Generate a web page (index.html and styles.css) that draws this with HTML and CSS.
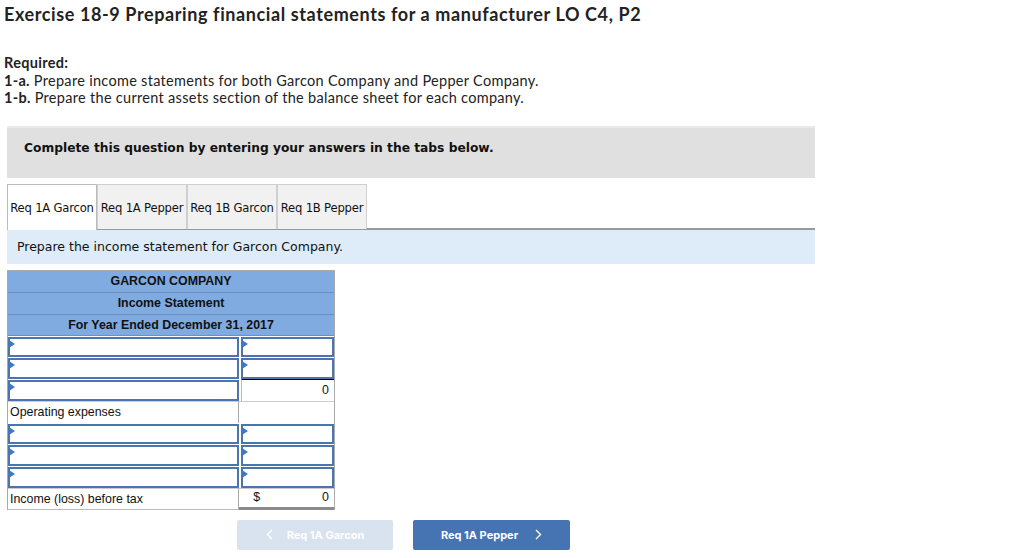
FILE: index.html
```html
<!DOCTYPE html>
<html>
<head>
<meta charset="utf-8">
<link rel="stylesheet" href="styles.css">
</head>
<body>
<div class="page">
  <h1 class="title">Exercise 18-9 Preparing financial statements for a manufacturer LO C4, P2</h1>
  <div class="required">
    <div class="req-label">Required:</div>
    <div class="req-line"><b>1-a.</b> Prepare income statements for both Garcon Company and Pepper Company.</div>
    <div class="req-line"><b>1-b.</b> Prepare the current assets section of the balance sheet for each company.</div>
  </div>
  <div class="instructions">Complete this question by entering your answers in the tabs below.</div>
  <div class="tabs">
    <div class="tab active">Req 1A Garcon</div>
    <div class="tab">Req 1A Pepper</div>
    <div class="tab">Req 1B Garcon</div>
    <div class="tab">Req 1B Pepper</div>
  </div>
  <div class="prompt">Prepare the income statement for Garcon Company.</div>
  <div class="sheet">
    <div class="hdr">GARCON COMPANY</div>
    <div class="hdr">Income Statement</div>
    <div class="hdr">For Year Ended December 31, 2017</div>
    <div class="row">
      <div class="cell left input"></div>
      <div class="cell right input"></div>
    </div>
    <div class="row">
      <div class="cell left input"></div>
      <div class="cell right input"></div>
    </div>
    <div class="row">
      <div class="cell left input"></div>
      <div class="cell right total">0</div>
    </div>
    <div class="row">
      <div class="cell left label">Operating expenses</div>
      <div class="cell right plain"></div>
    </div>
    <div class="row">
      <div class="cell left input"></div>
      <div class="cell right input"></div>
    </div>
    <div class="row">
      <div class="cell left input"></div>
      <div class="cell right input"></div>
    </div>
    <div class="row">
      <div class="cell left input"></div>
      <div class="cell right input"></div>
    </div>
    <div class="row">
      <div class="cell left label">Income (loss) before tax</div>
      <div class="cell right final"><span>$</span><span>0</span></div>
    </div>
  </div>
  <div class="nav">
    <div class="btn disabled">
      <svg class="chev" width="7" height="11" viewBox="0 0 7 11"><polyline points="6,1 1.5,5.5 6,10" fill="none" stroke="#fff" stroke-width="1.4"/></svg>
      <span class="btn-text">Req 1A Garcon</span>
    </div>
    <div class="btn primary">
      <span class="btn-text">Req 1A Pepper</span>
      <svg class="chev" width="7" height="11" viewBox="0 0 7 11"><polyline points="1,1 5.5,5.5 1,10" fill="none" stroke="#fff" stroke-width="1.4"/></svg>
    </div>
  </div>
</div>
</body>
</html>
```
FILE: styles.css
```css
* { box-sizing: border-box; }
html, body { margin: 0; padding: 0; background: #fff; }
.page { width: 1024px; height: 558px; overflow: hidden; position: relative; }
.title {
  margin: 0;
  padding: 4px 0 0 4px;
  font-family: Lato, "Liberation Sans", sans-serif;
  font-weight: 700;
  font-size: 18px;
  line-height: 20px;
  color: #222;
  letter-spacing: 0.6px;
  white-space: nowrap;
}
.required {
  margin-top: 30px;
  padding-left: 4px;
  font-family: Lato, "Liberation Sans", sans-serif;
  font-size: 14.5px;
  line-height: 17.5px;
  letter-spacing: 0.3px;
  color: #222;
  white-space: nowrap;
}
.req-label { font-weight: 700; }
.req-line b { font-weight: 700; }
.instructions {
  margin: 19px 0 0 7px;
  width: 808px;
  height: 52px;
  background: #e0e0e0;
  border-top: 2px solid #e9e9e9;
  padding: 12px 0 0 17px;
  font-family: "DejaVu Sans", Verdana, sans-serif;
  font-weight: 700;
  font-size: 12.25px;
  line-height: 16px;
  color: #111;
}
.tabs {
  margin: 6px 0 0 7px;
  width: 808px;
  height: 46px;
  display: flex;
  align-items: flex-end;
  border-bottom: 2px solid #999;
}
.tab {
  width: 90px;
  height: 45px;
  margin-bottom: -1px;
  background: #f1f1f1;
  border: 1px solid #cfcfcf;
  border-bottom: none;
  display: flex;
  align-items: center;
  justify-content: center;
  padding-top: 2px;
  font-family: "DejaVu Sans", Verdana, sans-serif;
  font-size: 11.6px;
  color: #111;
  white-space: nowrap;
  letter-spacing: -0.2px;
}
.tab.active {
  background: #fff;
  border-color: #bbb;
  height: 46px;
  margin-bottom: -2px;
}
.prompt {
  margin-left: 7px;
  width: 808px;
  height: 34px;
  background: #deecf9;
  padding: 9px 0 0 10px;
  font-family: "DejaVu Sans", Verdana, sans-serif;
  font-size: 12.5px;
  line-height: 16px;
  color: #111;
}
.sheet {
  margin: 6px 0 0 7px;
  width: 328px;
  border: 1px solid #aaa;
  border-bottom: none;
  font-family: "Liberation Sans", Arial, sans-serif;
  font-size: 12.4px;
  color: #111;
}
.hdr {
  height: 22px;
  background: #80abe0;
  border-bottom: 1px solid #6b8fbf;
  text-align: center;
  font-weight: 700;
  font-size: 12.4px;
  line-height: 21px;
}
.hdr:nth-child(3) { height: 21px; }
.row {
  display: flex;
  height: 21.75px;
}
.cell { height: 21.75px; position: relative; }
.left { width: 232px; }
.right { width: 94px; }
.input {
  border: 2px solid #4c74b0;
  margin: 1px 1px 0 1px;
  height: 20.75px;
  background: #fff;
}
.input::before {
  content: "";
  position: absolute;
  left: -1px;
  top: 1px;
  border-left: 6px solid #3f78c8;
  border-top: 4px solid transparent;
  border-bottom: 4px solid transparent;
}
.left.input { margin-left: 0; width: 232px; }
.right.input { width: 94px; margin-right: 0; }
.label {
  border-top: 1px solid #ccc;
  border-right: 1px solid #aaa;
  padding: 2px 0 0 2px;
  line-height: 16px;
  white-space: nowrap;
}
.plain {
  border-top: 1px solid #ccc;
  width: 95px;
}
.total {
  border-top: 1px solid #000;
  border-left: 1px solid #bbb;
  margin-left: 1px;
  width: 94px;
  text-align: right;
  padding: 2px 5px 0 0;
  line-height: 16px;
}
.final {
  border-top: 1px solid #ccc;
  border-bottom: 3px solid #8a8a8a;
  width: 95px;
  display: flex;
  justify-content: space-between;
  padding: 1px 5px 0 14px;
  line-height: 14px;
}
.row:last-child .label { border-bottom: 1px solid #bbb; }
.nav {
  display: flex;
  margin: 10px 0 0 237px;
  gap: 20px;
}
.btn {
  width: 156px;
  height: 30px;
  border-radius: 2px;
  display: flex;
  align-items: center;
  justify-content: center;
  gap: 14px;
  font-family: Inter, "Liberation Sans", sans-serif;
  font-weight: 700;
  font-size: 11px;
  color: #fff;
  white-space: nowrap;
}
.btn-text { display: block; }
.btn.disabled { background: #d9e3ef; }
.btn.primary { background: #4674b2; width: 157px; gap: 17px; }
.chev { flex: none; display: block; }
```
